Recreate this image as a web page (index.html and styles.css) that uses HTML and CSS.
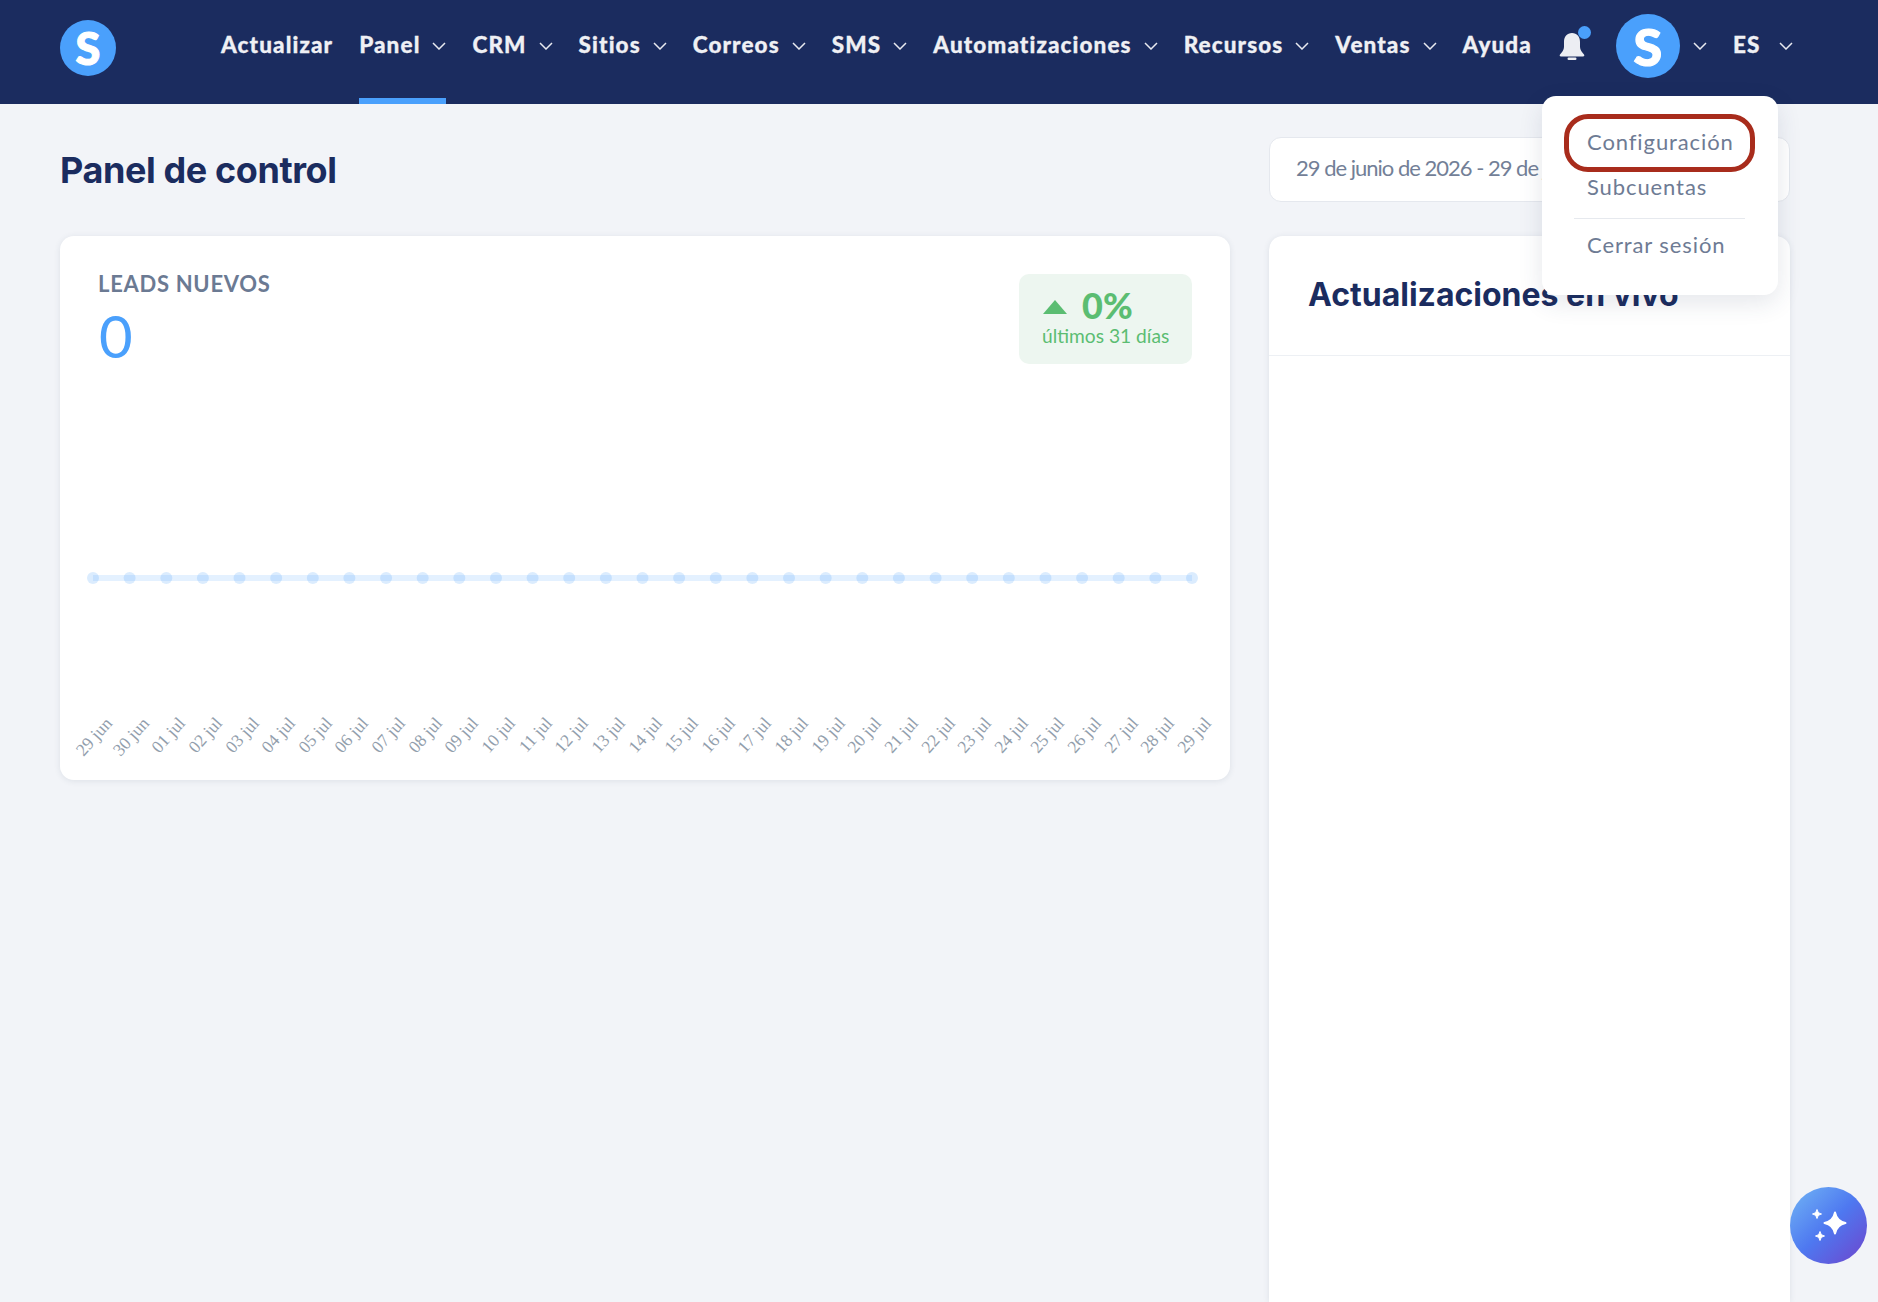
FILE: index.html
```html
<!DOCTYPE html>
<html lang="es">

<head>
    <meta charset="UTF-8">
    <meta name="viewport" content="width=device-width, initial-scale=1.0">
    <title>Panel de control</title>
    <link rel="stylesheet" href="styles.css">
</head>

<body>
    <svg class="icon-defs" width="0" height="0" aria-hidden="true">
        <symbol id="chev" viewBox="0 0 14 8">
            <path d="M1 1l6 6 6-6" fill="none" stroke="currentColor" stroke-width="1.5" />
        </symbol>
    </svg>

    <header class="topbar">
        <a class="logo" href="#">S</a>
        <nav class="nav">
            <a class="nav-link" href="#">Actualizar</a>
            <a class="nav-link active" href="#">Panel <svg class="chev"><use href="#chev" /></svg></a>
            <a class="nav-link" href="#">CRM <svg class="chev"><use href="#chev" /></svg></a>
            <a class="nav-link" href="#">Sitios <svg class="chev"><use href="#chev" /></svg></a>
            <a class="nav-link" href="#">Correos <svg class="chev"><use href="#chev" /></svg></a>
            <a class="nav-link" href="#">SMS <svg class="chev"><use href="#chev" /></svg></a>
            <a class="nav-link" href="#">Automatizaciones <svg class="chev"><use href="#chev" /></svg></a>
            <a class="nav-link" href="#">Recursos <svg class="chev"><use href="#chev" /></svg></a>
            <a class="nav-link" href="#">Ventas <svg class="chev"><use href="#chev" /></svg></a>
            <a class="nav-link" href="#">Ayuda</a>
        </nav>
        <a class="bell" href="#">
            <svg width="26" height="27" viewBox="0 0 26 27">
                <path d="M13 0c-5 0-8 3.500-8 9v5c0 3-2 5-4 7.500-.7 1-.2 2 1 2h22c1.200 0 1.700-1 1-2-2-2.500-4-4.500-4-7.500V9c0-5.500-3-9-8-9z" fill="#eceef3" />
                <rect x="8.500" y="24.500" width="9" height="2.500" rx="1.200" fill="#eceef3" />
            </svg>
            <span class="bell-dot"></span>
        </a>
        <a class="avatar" href="#">S</a>
        <svg class="chev chev-avatar"><use href="#chev" /></svg>
        <a class="nav-link lang" href="#">ES <svg class="chev"><use href="#chev" /></svg></a>

        <div class="menu">
            <a class="menu-item marked" href="#">Configuración</a>
            <a class="menu-item" href="#">Subcuentas</a>
            <div class="menu-line"></div>
            <a class="menu-item" href="#">Cerrar sesión</a>
        </div>
    </header>

    <main class="page">
        <div class="page-head">
            <h1>Panel de control</h1>
            <div class="date-box">29 de junio de 2026 - 29 de julio de 2026</div>
        </div>

        <div class="columns">
            <section class="card leads">
                <div class="leads-head">
                    <div>
                        <div class="leads-label">LEADS NUEVOS</div>
                        <div class="leads-num">0</div>
                    </div>
                    <div class="trend">
                        <div class="trend-top"><span class="trend-arrow"></span>0%</div>
                        <div class="trend-sub">últimos 31 días</div>
                    </div>
                </div>
                <svg class="chart" viewBox="0 0 1170 417" width="1170" height="417">
                    <line class="chart-line" x1="33" y1="215" x2="1132" y2="215" />
                    <g class="chart-dots">
                        <circle cx="33" cy="215" r="6" />
                        <circle cx="69.600" cy="215" r="6" />
                        <circle cx="106.300" cy="215" r="6" />
                        <circle cx="142.900" cy="215" r="6" />
                        <circle cx="179.500" cy="215" r="6" />
                        <circle cx="216.200" cy="215" r="6" />
                        <circle cx="252.800" cy="215" r="6" />
                        <circle cx="289.400" cy="215" r="6" />
                        <circle cx="326.100" cy="215" r="6" />
                        <circle cx="362.700" cy="215" r="6" />
                        <circle cx="399.300" cy="215" r="6" />
                        <circle cx="436" cy="215" r="6" />
                        <circle cx="472.600" cy="215" r="6" />
                        <circle cx="509.200" cy="215" r="6" />
                        <circle cx="545.900" cy="215" r="6" />
                        <circle cx="582.500" cy="215" r="6" />
                        <circle cx="619.100" cy="215" r="6" />
                        <circle cx="655.800" cy="215" r="6" />
                        <circle cx="692.400" cy="215" r="6" />
                        <circle cx="729" cy="215" r="6" />
                        <circle cx="765.700" cy="215" r="6" />
                        <circle cx="802.300" cy="215" r="6" />
                        <circle cx="838.900" cy="215" r="6" />
                        <circle cx="875.600" cy="215" r="6" />
                        <circle cx="912.200" cy="215" r="6" />
                        <circle cx="948.800" cy="215" r="6" />
                        <circle cx="985.500" cy="215" r="6" />
                        <circle cx="1022.100" cy="215" r="6" />
                        <circle cx="1058.700" cy="215" r="6" />
                        <circle cx="1095.400" cy="215" r="6" />
                        <circle cx="1132" cy="215" r="6" />
                    </g>
                    <g class="chart-labels">
                        <text transform="translate(53 361) rotate(-48)">29 jun</text>
                        <text transform="translate(90 361) rotate(-48)">30 jun</text>
                        <text transform="translate(126 361) rotate(-48)">01 jul</text>
                        <text transform="translate(163 361) rotate(-48)">02 jul</text>
                        <text transform="translate(200 361) rotate(-48)">03 jul</text>
                        <text transform="translate(236 361) rotate(-48)">04 jul</text>
                        <text transform="translate(273 361) rotate(-48)">05 jul</text>
                        <text transform="translate(309 361) rotate(-48)">06 jul</text>
                        <text transform="translate(346 361) rotate(-48)">07 jul</text>
                        <text transform="translate(383 361) rotate(-48)">08 jul</text>
                        <text transform="translate(419 361) rotate(-48)">09 jul</text>
                        <text transform="translate(456 361) rotate(-48)">10 jul</text>
                        <text transform="translate(493 361) rotate(-48)">11 jul</text>
                        <text transform="translate(529 361) rotate(-48)">12 jul</text>
                        <text transform="translate(566 361) rotate(-48)">13 jul</text>
                        <text transform="translate(603 361) rotate(-48)">14 jul</text>
                        <text transform="translate(639 361) rotate(-48)">15 jul</text>
                        <text transform="translate(676 361) rotate(-48)">16 jul</text>
                        <text transform="translate(712 361) rotate(-48)">17 jul</text>
                        <text transform="translate(749 361) rotate(-48)">18 jul</text>
                        <text transform="translate(786 361) rotate(-48)">19 jul</text>
                        <text transform="translate(822 361) rotate(-48)">20 jul</text>
                        <text transform="translate(859 361) rotate(-48)">21 jul</text>
                        <text transform="translate(896 361) rotate(-48)">22 jul</text>
                        <text transform="translate(932 361) rotate(-48)">23 jul</text>
                        <text transform="translate(969 361) rotate(-48)">24 jul</text>
                        <text transform="translate(1005 361) rotate(-48)">25 jul</text>
                        <text transform="translate(1042 361) rotate(-48)">26 jul</text>
                        <text transform="translate(1079 361) rotate(-48)">27 jul</text>
                        <text transform="translate(1115 361) rotate(-48)">28 jul</text>
                        <text transform="translate(1152 361) rotate(-48)">29 jul</text>
                    </g>
                </svg>
            </section>

            <section class="card live">
                <h2>Actualizaciones en vivo</h2>
            </section>
        </div>
    </main>

    <a class="fab" href="#">
        <svg width="77" height="77" viewBox="0 0 77 77">
            <path d="M45 25.500c1.200 6 4.500 9.300 10.500 10.500-6 1.200-9.300 4.500-10.500 10.500-1.200-6-4.500-9.300-10.500-10.500 6-1.200 9.300-4.500 10.500-10.500z" fill="#fff" stroke="#fff" stroke-width="2" stroke-linejoin="round" />
            <path d="M27 22.500c.6 2.500 2 3.900 4.500 4.500-2.500.6-3.900 2-4.500 4.500-.6-2.500-2-3.900-4.500-4.500 2.500-.6 3.900-2 4.500-4.500z" fill="#fff" stroke="#fff" stroke-linejoin="round" />
            <path d="M30 44.500c.6 2.500 2 3.900 4.500 4.500-2.500.6-3.900 2-4.500 4.500-.6-2.500-2-3.900-4.500-4.500 2.500-.6 3.900-2 4.500-4.500z" fill="#fff" stroke="#fff" stroke-linejoin="round" />
        </svg>
    </a>
</body>

</html>
```

FILE: styles.css
```css
* {
    box-sizing: border-box;
    margin: 0;
    padding: 0;
    text-decoration: none;
}

html,
body {
    height: 100%;
    overflow: hidden;
}

body {
    display: flex;
    flex-direction: column;
    background-color: #f2f4f8;
    font-family: "Lato", "Liberation Sans", sans-serif;
    color: #1b2c5f;
}

.icon-defs {
    position: absolute;
}

/* barra superior */
.topbar {
    position: relative;
    flex: none;
    display: flex;
    align-items: center;
    height: 104px;
    padding-left: 60px;
    background-color: #1b2c5f;
    z-index: 10;
}

.logo,
.avatar {
    display: flex;
    align-items: center;
    justify-content: center;
    flex: none;
    border-radius: 50%;
    background-color: #4aa0fc;
    color: #fff;
    font-family: "Lato", sans-serif;
    font-weight: 900;
    -webkit-text-stroke: 1.2px #fff;
}

.logo {
    width: 56px;
    height: 56px;
    margin-top: -8px;
    font-size: 45px;
}

.nav {
    display: flex;
    gap: 26px;
    margin-left: 105px;
}

.nav-link {
    position: relative;
    display: flex;
    align-items: center;
    gap: 12px;
    height: 104px;
    padding-bottom: 16px;
    color: #eff0f4;
    font-size: 22.500px;
    font-weight: 900;
    letter-spacing: 1.100px;
    white-space: nowrap;
    -webkit-text-stroke: 0.3px #eff0f4;
}

.nav-link.active::after {
    content: "";
    position: absolute;
    left: 0;
    right: 0;
    bottom: 0;
    height: 6px;
    background-color: #4aa0fc;
}

.chev {
    flex: none;
    width: 14px;
    height: 8px;
    margin-top: 3px;
    color: #e8eaf0;
}

.bell {
    position: relative;
    display: block;
    flex: none;
    width: 26px;
    height: 27px;
    margin-left: 27px;
    margin-top: -11px;
}

.bell-dot {
    position: absolute;
    top: -7px;
    right: -6px;
    width: 13px;
    height: 13px;
    border-radius: 50%;
    background-color: #4aa0fc;
}

.avatar {
    width: 64px;
    height: 64px;
    margin-left: 31px;
    margin-top: -12px;
    font-size: 52px;
}

.chev-avatar {
    margin-left: 13px;
    margin-top: -13px;
}

.lang {
    margin-left: 26px;
    gap: 19px;
}

/* menu de usuario */
.menu {
    position: absolute;
    top: 96px;
    left: 1542px;
    width: 236px;
    height: 199px;
    padding-top: 23px;
    background-color: #fff;
    border-radius: 14px;
    box-shadow: 0 8px 24px rgba(40, 55, 90, 0.12);
}

.menu-item {
    position: relative;
    display: block;
    height: 45px;
    padding-left: 45px;
    color: #6e7b94;
    font-size: 22px;
    line-height: 45px;
    letter-spacing: 0.900px;
}

.menu-item.marked::after {
    content: "";
    position: absolute;
    top: -5px;
    bottom: -8px;
    left: 22px;
    right: 23px;
    border: 5px solid #a82c1c;
    border-radius: 24px;
}

.menu-line {
    height: 1px;
    margin: 9px 33px 3px 32px;
    background-color: #e6e9ee;
}

/* contenido */
.page {
    flex: 1;
    display: flex;
    flex-direction: column;
    min-height: 0;
    padding: 33px 88px 0 60px;
}

.page-head {
    display: flex;
    align-items: center;
    justify-content: space-between;
    height: 65px;
    margin-bottom: 34px;
}

h1 {
    font-family: "Inter", sans-serif;
    font-size: 36px;
    font-weight: 700;
    letter-spacing: -0.400px;
}

.date-box {
    width: 521px;
    height: 65px;
    padding-left: 26px;
    line-height: 60px;
    overflow: hidden;
    white-space: nowrap;
    background-color: #fff;
    border: 1px solid #e5e8ee;
    border-radius: 12px;
    color: #737f97;
    font-size: 22px;
    letter-spacing: -1px;
}

.columns {
    flex: 1;
    display: flex;
    gap: 39px;
    min-height: 0;
}

.card {
    background-color: #fff;
    border-radius: 14px;
    box-shadow: 0 1px 6px rgba(40, 55, 90, 0.1);
}

.leads {
    flex: none;
    width: 1170px;
    height: 544px;
}

.leads-head {
    display: flex;
    justify-content: space-between;
    height: 127px;
    padding: 37px 38px 0 38px;
}

.leads-label {
    color: #6b7a93;
    font-size: 22px;
    font-weight: 700;
    line-height: 22px;
    letter-spacing: 0.700px;
}

.leads-num {
    margin-top: 11px;
    margin-left: 1px;
    color: #4aa0fc;
    font-size: 58px;
    line-height: 60px;
}

.trend {
    width: 173px;
    height: 90px;
    margin-top: 1px;
    padding: 13px 0 0 23px;
    background-color: #edf6f0;
    border-radius: 10px;
    color: #5bbd72;
}

.trend-top {
    display: flex;
    align-items: center;
    gap: 15px;
    font-size: 36px;
    font-weight: 900;
    line-height: 36px;
}

.trend-arrow {
    width: 0;
    height: 0;
    margin-left: 1px;
    margin-top: 3px;
    border-left: 12px solid transparent;
    border-right: 12px solid transparent;
    border-bottom: 14px solid #5bbd72;
}

.trend-sub {
    font-size: 19.200px;
    line-height: 26px;
}

.chart {
    display: block;
}

.chart-line {
    stroke: #4aa0fc;
    stroke-opacity: 0.15;
    stroke-width: 6;
}

.chart-dots circle {
    fill: #4aa0fc;
    fill-opacity: 0.2;
}

.chart-labels text {
    fill: #929eac;
    font-family: "Liberation Serif", serif;
    font-size: 17.500px;
    text-anchor: end;
}

.live {
    flex: none;
    width: 521px;
    border-radius: 14px 14px 0 0;
}

.live h2 {
    height: 120px;
    padding: 39px 0 0 39px;
    border-bottom: 1px solid #edf0f4;
    font-family: "Inter", sans-serif;
    font-size: 32px;
    font-weight: 700;
    line-height: 40px;
}

/* boton flotante */
.fab {
    position: fixed;
    left: 1790px;
    top: 1187px;
    display: block;
    width: 77px;
    height: 77px;
    border-radius: 50%;
    background: linear-gradient(135deg, #72b6f5 0%, #4e78f0 50%, #6f44cc 100%);
    z-index: 20;
}

.fab svg {
    display: block;
}
```
